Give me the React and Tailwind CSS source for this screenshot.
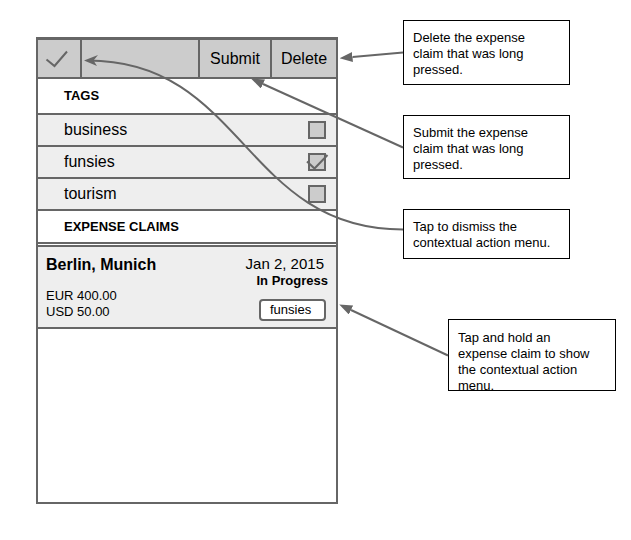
const tags = [
  { name: 'business', checked: false },
  { name: 'funsies', checked: true },
  { name: 'tourism', checked: false },
];

function TagRow({ name, checked }) {
  return (
    <label className="flex h-8 items-center justify-between border-b-2 border-[#666] bg-[#eee] pr-2.5 pl-[26px] text-base">
      {name}
      <span className="relative flex">
        <input
          type="checkbox"
          defaultChecked={checked}
          className="peer size-[18px] appearance-none border-2 border-[#666] bg-[#ccc]"
        />
        <svg
          viewBox="0 0 24 20"
          className="pointer-events-none absolute -top-px -left-[3px] hidden h-5 w-6 peer-checked:block"
          fill="none"
          stroke="#666"
          strokeWidth="2"
        >
          <path d="M2 9.500 L9.500 16.500 L22.500 3" />
        </svg>
      </span>
    </label>
  );
}

function Note({ className, children }) {
  return (
    <p className={`overflow-hidden border border-black bg-white pr-4 pl-[9px] text-[13px] leading-4 ${className}`}>
      {children}
    </p>
  );
}

function Arrows() {
  return (
    <svg
      className="pointer-events-none absolute top-0 left-0 h-[540px] w-[631px]"
      viewBox="0 0 631 540"
      fill="none"
      stroke="#666"
      strokeWidth="2"
      aria-hidden="true"
    >
      <defs>
        <marker id="head" viewBox="0 0 13 10" refX="0" refY="5" markerWidth="13" markerHeight="10" markerUnits="userSpaceOnUse" orient="auto-start-reverse">
          <path d="M13 5 L0 0 V10 Z" fill="#666" stroke="none" />
        </marker>
      </defs>
      <path d="M403 52.500 L352.500 57" markerEnd="url(#head)" />
      <path d="M403 147.500 L263 84" markerEnd="url(#head)" />
      <path d="M448 355.500 L351 310" markerEnd="url(#head)" />
      <path d="M403 229.500 C244 229.500 244 60.500 88 60.500" />
      <path d="M84 60.500 L98 55 L93.500 60.500 L97 66 Z" fill="#666" stroke="none" />
    </svg>
  );
}

export default function App() {
  return (
    <div className="relative flex min-h-screen items-start bg-white pl-9 font-['Liberation_Sans',Arial,sans-serif] text-black">
      <main className="mt-[37px] w-[302px] shrink-0 border-2 border-t-3 border-[#666]">
        <div className="flex h-[39px] border-b-2 border-[#666] bg-[#ccc] text-base">
          <button type="button" aria-label="Dismiss" className="flex w-11 items-center justify-center border-r-2 border-[#666] pr-1">
            <svg viewBox="0 0 24 18" className="h-[18px] w-6" fill="none" stroke="#666" strokeWidth="2">
              <path d="M1.500 9.500 L9.500 16 L22 1.500" />
            </svg>
          </button>
          <button type="button" className="ml-auto w-[72px] border-l-2 border-[#666]">Submit</button>
          <button type="button" className="w-[66px] border-l-2 border-[#666]">Delete</button>
        </div>

        <h2 className="flex h-9 items-center border-b-2 border-[#666] pl-[26px] text-[13px] font-bold">TAGS</h2>
        {tags.map((tag) => (
          <TagRow key={tag.name} {...tag} />
        ))}
        <h2 className="flex h-[33px] items-center border-b-2 border-[#666] pl-[26px] text-[13px] font-bold">EXPENSE CLAIMS</h2>

        <article className="mt-px flex h-[84px] justify-between border-y-2 border-[#666] bg-[#eee] px-2 pt-2">
          <div>
            <h3 className="text-base leading-5 font-bold">Berlin, Munich</h3>
            <p className="mt-[13px] text-[13px] leading-4">EUR 400.00</p>
            <p className="text-[13px] leading-4">USD 50.00</p>
          </div>
          <div className="flex flex-col items-end">
            <p className="pr-1 text-[15px] leading-[18px]">Jan 2, 2015</p>
            <p className="text-[13px] leading-4 font-bold">In Progress</p>
            <span className="mt-2.5 mr-0.5 flex h-[22px] w-[67px] items-center rounded border-2 border-[#666] bg-white pl-[9px] text-[13px]">
              funsies
            </span>
          </div>
        </article>
        <div className="h-[173px] bg-white" />
      </main>

      <aside className="ml-[65px] flex flex-1 flex-col pt-5 pr-[15px]">
        <Note className="mb-[30px] h-[65px] w-[167px] pt-[9px]">Delete the expense claim that was long pressed.</Note>
        <Note className="mb-[30px] h-16 w-[167px] pt-[9px]">Submit the expense claim that was long pressed.</Note>
        <Note className="mb-[60px] h-[50px] w-[167px] pt-[9px]">Tap to dismiss the contextual action menu.</Note>
        <Note className="h-[72px] w-[168px] self-end pt-2.5">Tap and hold an expense claim to show the contextual action menu.</Note>
      </aside>

      <Arrows />
    </div>
  );
}
